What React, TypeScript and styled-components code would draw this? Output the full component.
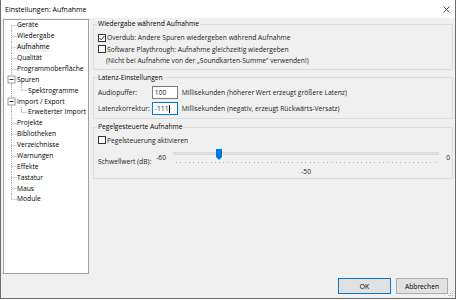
import React from 'react';
import styled, { createGlobalStyle } from 'styled-components';

const GlobalStyle = createGlobalStyle`
  html, body {
    margin: 0;
    padding: 0;
    background: #ffffff;
  }
  body {
    font-family: "Open Sans", "Liberation Sans", Arial, sans-serif;
    font-size: 6.7px;
    color: #1b1b1b;
  }
  * {
    box-sizing: border-box;
  }
`;

const Window = styled.div`
  position: relative;
  width: 456px;
  height: 299px;
  display: flex;
  flex-direction: column;
  background: #f0f0f0;
  border: 1px solid #6e6e6e;
  border-top: none;
`;

const TitleBar = styled.div`
  height: 18px;
  flex: none;
  display: flex;
  align-items: center;
  justify-content: space-between;
  padding: 0 5px 0 4px;
  background: #ffffff;
  color: #000;
  font-size: 7px;
`;

const Main = styled.div`
  height: 256px;
  flex: none;
  display: flex;
  gap: 4px;
  padding: 0 2px;
`;

const Tree = styled.ul`
  width: 86px;
  height: 255px;
  margin: 1px 0 0;
  padding: 0;
  list-style: none;
  overflow: hidden;
  background: #ffffff;
  border: 1px solid #a3a3a3;
`;

const TreeItem = styled.li`
  height: 10.875px;
  display: flex;
  align-items: center;
  white-space: nowrap;
  color: #000;
`;

const TreeLabel = styled.span<{ $selected?: boolean }>`
  line-height: 10px;
  padding: 0 1px;
  margin-left: -1px;
  background: ${(p) => (p.$selected ? '#f2f2f2' : 'transparent')};
`;

const Panel = styled.div`
  flex: 1;
  display: flex;
  flex-direction: column;
  gap: 2px;
  min-width: 0;
`;

const Group = styled.fieldset<{ $pt: number; $pb: number }>`
  margin: 0;
  min-width: 0;
  display: flex;
  flex-direction: column;
  border: 1px solid #dcdcdc;
  padding: ${(p) => p.$pt}px 2px ${(p) => p.$pb}px 4px;
`;

const Legend = styled.legend`
  padding: 0 1px;
  margin-left: -1px;
  line-height: 12px;
  color: #000;
`;

const CheckRow = styled.div<{ $indent?: number }>`
  height: 11.5px;
  display: flex;
  align-items: center;
  gap: 1px;
  padding-left: ${(p) => p.$indent ?? 0}px;
  white-space: nowrap;
`;

const Box = styled.span`
  width: 8px;
  height: 8px;
  flex: none;
  display: flex;
  align-items: center;
  justify-content: center;
  background: #ffffff;
  border: 1px solid #333333;
`;

const LatencyGrid = styled.div`
  display: grid;
  grid-template-columns: max-content 26px auto;
  column-gap: 2px;
  row-gap: 3px;
  align-items: center;
  white-space: nowrap;
`;

const Hint = styled.span`
  margin-left: 2px;
`;

const NumberField = styled.div<{ $focused?: boolean }>`
  height: 13px;
  display: flex;
  align-items: center;
  padding: 0 2px;
  background: #ffffff;
  border: 1px solid ${(p) => (p.$focused ? '#0078d7' : '#7a7a7a')};
`;

const Caret = styled.span`
  width: 1px;
  height: 8px;
  margin-left: 0.5px;
  background: #000;
`;

const ThresholdRow = styled.div`
  display: flex;
  align-items: center;
  gap: 5px;
  white-space: nowrap;
`;

const Slider = styled.div`
  flex: 1;
  display: grid;
  grid-template-columns: auto 1fr auto;
  grid-template-rows: 20px 11px;
  column-gap: 7px;
`;

const EndLabel = styled.span`
  align-self: start;
  margin-top: 6.5px;
  line-height: 10px;
`;

const TrackArea = styled.div`
  position: relative;
  display: flex;
  flex-direction: column;
`;

const Rail = styled.div`
  height: 3px;
  margin-top: 5.5px;
  background: #e6e6e6;
  border: 1px solid #dadada;
`;

const Ticks = styled.div`
  height: 1px;
  margin: 7.5px 3px 0;
  display: flex;
  justify-content: space-between;
`;

const Tick = styled.span`
  width: 1px;
  height: 1px;
  background: #b0b0b0;
`;

const Thumb = styled.svg`
  position: absolute;
  top: 2.5px;
  margin-left: -3px;
`;

const ValueLabel = styled.span`
  grid-column: 2;
  text-align: center;
  line-height: 11px;
`;

const Footer = styled.div`
  flex: 1;
  display: flex;
  justify-content: flex-end;
  align-items: flex-start;
  gap: 5px;
  padding: 4px 7px 0 0;
`;

const Button = styled.button<{ $primary?: boolean; $w: number }>`
  width: ${(p) => p.$w}px;
  height: 16px;
  padding: 0;
  font: inherit;
  color: #000;
  background: #e1e1e1;
  border: 1px solid ${(p) => (p.$primary ? '#0078d7' : '#adadad')};
`;

const Grip = styled.svg`
  position: absolute;
  right: 1px;
  bottom: 1px;
`;

type TreeRow = {
  label: string;
  level: 0 | 1;
  first?: boolean;
  last?: boolean;
  expander?: boolean;
  selected?: boolean;
};

const rows: TreeRow[] = [
  { label: 'Geräte', level: 0, first: true },
  { label: 'Wiedergabe', level: 0 },
  { label: 'Aufnahme', level: 0, selected: true },
  { label: 'Qualität', level: 0 },
  { label: 'Programmoberfläche', level: 0 },
  { label: 'Spuren', level: 0, expander: true },
  { label: 'Spektrogramme', level: 1 },
  { label: 'Import / Export', level: 0, expander: true },
  { label: 'Erweiterter Import', level: 1 },
  { label: 'Projekte', level: 0 },
  { label: 'Bibliotheken', level: 0 },
  { label: 'Verzeichnisse', level: 0 },
  { label: 'Warnungen', level: 0 },
  { label: 'Effekte', level: 0 },
  { label: 'Tastatur', level: 0 },
  { label: 'Maus', level: 0 },
  { label: 'Module', level: 0, last: true },
];

function Guides({ row }: { row: TreeRow }) {
  const h = 10.875;
  const mid = 5.5;
  const w = row.level === 0 ? 13 : 24;
  const top = row.level === 0 && row.first ? mid : 0;
  const bottom = row.level === 0 && row.last ? mid : h;
  return (
    <svg width={w} height={h} style={{ flex: 'none' }}>
      <g stroke="#a8a8a8" strokeWidth="1" strokeDasharray="1 1" fill="none">
        <line x1="7.5" y1={top} x2="7.5" y2={bottom} />
        {row.level === 0 && <line x1="7.5" y1={mid} x2="12.5" y2={mid} />}
        {row.level === 1 && (
          <>
            <line x1="17.5" y1="0" x2="17.5" y2={mid} />
            <line x1="17.5" y1={mid} x2="23.5" y2={mid} />
          </>
        )}
      </g>
      {row.expander && (
        <g>
          <rect x="4" y={mid - 3.5} width="7" height="7" fill="#fff" stroke="#9a9a9a" strokeWidth="1" />
          <line x1="5.5" y1={mid} x2="9.5" y2={mid} stroke="#333" strokeWidth="1" />
        </g>
      )}
    </svg>
  );
}

function CheckBox({ checked }: { checked?: boolean }) {
  return (
    <Box>
      {checked && (
        <svg width="6" height="6" viewBox="0 0 6 6">
          <polyline points="0.6,3.1 2.2,4.8 5.4,1" fill="none" stroke="#222" strokeWidth="0.9" />
        </svg>
      )}
    </Box>
  );
}

const sliderMin = -60;
const sliderMax = 0;
const sliderValue = -50;

function Threshold() {
  const pct = ((sliderValue - sliderMin) / (sliderMax - sliderMin)) * 100;
  const ticks = Array.from({ length: sliderMax - sliderMin + 1 });
  return (
    <Slider>
      <EndLabel>{sliderMin}</EndLabel>
      <TrackArea>
        <Rail />
        <Ticks>
          {ticks.map((_, i) => (
            <Tick key={i} />
          ))}
        </Ticks>
        <Thumb
          width="6"
          height="11"
          viewBox="0 0 6 11"
          style={{ left: `calc(3px + (100% - 6px) * ${pct / 100})` }}
        >
          <polygon points="0,0 6,0 6,8 3,11 0,8" fill="#0078d7" />
        </Thumb>
      </TrackArea>
      <EndLabel>{sliderMax}</EndLabel>
      <ValueLabel>{sliderValue}</ValueLabel>
    </Slider>
  );
}

function App() {
  return (
    <Window>
      <GlobalStyle />
      <TitleBar>
        <span>Einstellungen: Aufnahme</span>
        <svg width="7" height="7" viewBox="0 0 7 7">
          <path d="M0.5 0.5 L6.5 6.5 M6.5 0.5 L0.5 6.5" stroke="#222" strokeWidth="0.8" />
        </svg>
      </TitleBar>
      <Main>
        <Tree>
          {rows.map((row) => (
            <TreeItem key={row.label}>
              <Guides row={row} />
              <TreeLabel $selected={row.selected}>{row.label}</TreeLabel>
            </TreeItem>
          ))}
        </Tree>
        <Panel>
          <Group $pt={2} $pb={2}>
            <Legend>Wiedergabe während Aufnahme</Legend>
            <CheckRow>
              <CheckBox checked />
              <span>Overdub: Andere Spuren wiedergeben während Aufnahme</span>
            </CheckRow>
            <CheckRow>
              <CheckBox />
              <span>Software Playthrough: Aufnahme gleichzeitig wiedergeben</span>
            </CheckRow>
            <CheckRow $indent={8}>
              (Nicht bei Aufnahme von der „Soundkarten-Summe“ verwenden!)
            </CheckRow>
          </Group>
          <Group $pt={2.5} $pb={3}>
            <Legend>Latenz-Einstellungen</Legend>
            <LatencyGrid>
              <span>Audiopuffer:</span>
              <NumberField>100</NumberField>
              <Hint>Millisekunden (höherer Wert erzeugt größere Latenz)</Hint>
              <span>Latenzkorrektur:</span>
              <NumberField $focused>
                -111
                <Caret />
              </NumberField>
              <Hint>Millisekunden (negativ, erzeugt Rückwärts-Versatz)</Hint>
            </LatencyGrid>
          </Group>
          <Group $pt={1.5} $pb={0.5}>
            <Legend>Pegelgesteuerte Aufnahme</Legend>
            <CheckRow>
              <CheckBox />
              <span>Pegelsteuerung aktivieren</span>
            </CheckRow>
            <ThresholdRow>
              <span>Schwellwert (dB):</span>
              <Threshold />
            </ThresholdRow>
          </Group>
        </Panel>
      </Main>
      <Footer>
        <Button $primary $w={53}>
          OK
        </Button>
        <Button $w={52}>Abbrechen</Button>
      </Footer>
      <Grip width="6" height="6" viewBox="0 0 6 6">
        <g fill="#b0b0b0">
          <rect x="4" y="0" width="1" height="1" />
          <rect x="2" y="2" width="1" height="1" />
          <rect x="4" y="2" width="1" height="1" />
          <rect x="0" y="4" width="1" height="1" />
          <rect x="2" y="4" width="1" height="1" />
          <rect x="4" y="4" width="1" height="1" />
        </g>
      </Grip>
    </Window>
  );
}

export default App;
